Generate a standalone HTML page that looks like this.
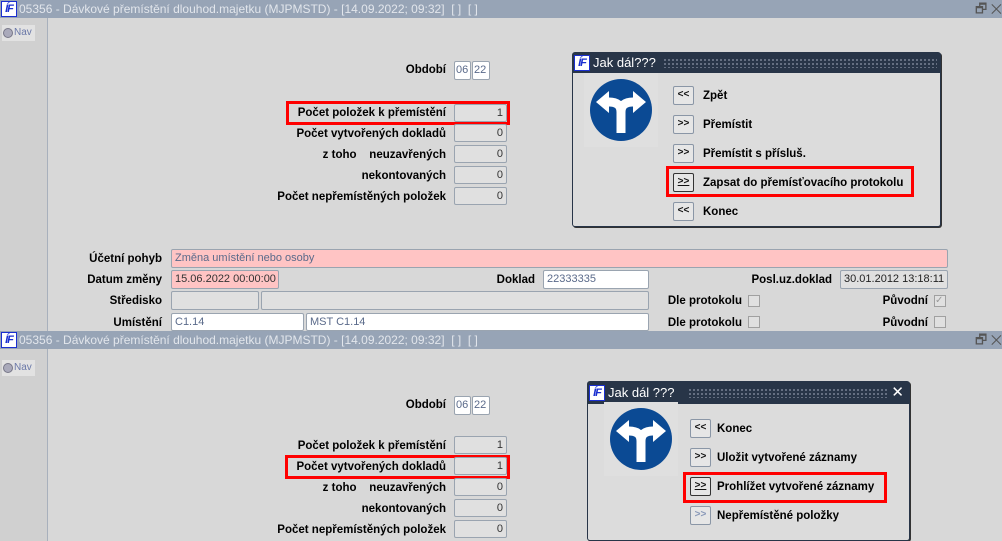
<!DOCTYPE html>
<html><head><meta charset="utf-8"><style>
*{margin:0;padding:0;box-sizing:border-box}
body{width:1002px;height:541px;overflow:hidden;background:#d8d8d8;font-family:"Liberation Sans",Arial,sans-serif;position:relative}
.a{position:absolute}
.tb{position:absolute;left:0;width:1002px;height:18px;background:#97a4b6;color:#e2e6ec;font-size:12px;line-height:18px;padding-left:19px;white-space:nowrap}
.logo{position:absolute;left:1px;top:1px;width:16px;height:16px;background:#fff;border:1px solid #1a2fd0;color:#1a2fd0;font:italic bold 11px/14px "Liberation Sans",sans-serif;text-align:center;letter-spacing:-1px}
.ctl{position:absolute;right:0;top:0;font-size:13px;color:#555;line-height:18px}
.side{position:absolute;left:0;width:48px;background:#d0d0d0;border-right:1px solid #a8b0bc}
.nav{position:absolute;left:2px;width:33px;height:14px;background:#e2e2e2;font-size:10px;color:#6a78a8;line-height:14px;padding-left:12px}
.nav:before{content:"";position:absolute;left:1px;top:3px;width:8px;height:8px;border-radius:50%;background:#aab;border:1px solid #778}
.lb{position:absolute;font-weight:bold;font-size:11.5px;color:#000;text-align:right;white-space:nowrap;line-height:14px}
.f{position:absolute;height:19px;border:1px solid #9aa4b0;border-radius:2px;background:#e0e0e0;font-size:11px;color:#5a6a8a;line-height:17px;padding:0 3px;white-space:nowrap;font-family:"Liberation Sans Narrow","Liberation Sans",sans-serif}
.w{background:#fff}
.p{background:#ffc4c4}
.r{text-align:right;color:#333}
.red{position:absolute;border:3px solid #f00}
.dlg{position:absolute;background:#dcdcdc;border:1px solid #283548;border-radius:3px;box-shadow:1px 1px 0 #333}
.dt{position:absolute;left:0;top:0;right:0;height:20px;background:#283548;color:#fff;font-size:13px;line-height:20px;padding-left:20px}
.dt .logo{top:2px;left:1px}
.dots{position:absolute;top:5px;height:10px;background-image:radial-gradient(#6a7486 1px,transparent 1.2px);background-size:4px 4px}
.bt{position:absolute;width:21px;height:19px;border:1px solid #8a96a6;border-radius:2px;background:#e6e6e6;font-size:10px;font-weight:bold;text-align:center;line-height:16px;color:#111}
.bl{position:absolute;font-weight:bold;font-size:11.5px;line-height:14px;white-space:nowrap}
.cb{position:absolute;width:12px;height:12px;border:1px solid #a0a0a0;background:#e0e0e0}
</style></head><body>

<div class="tb" style="top:0"><div class="logo">ÍF</div>05356 - Dávkové přemístění dlouhod.majetku (MJPMSTD) - [14.09.2022; 09:32]&nbsp; [ ]&nbsp; [ ]<span class="ctl">🗗 ✕</span></div>
<div class="side" style="top:18px;height:313px"></div>
<div class="nav" style="top:25px;height:16px;line-height:16px">Nav</div>

<div class="lb" style="right:556px;top:63px">Období</div>
<div class="f w" style="left:454px;top:61px;width:17px;padding:0 1px">06</div>
<div class="f w" style="left:472px;top:61px;width:18px;padding:0 1px">22</div>

<div class="red" style="left:286px;top:101px;width:224px;height:24px"></div>
<div class="lb" style="right:556px;top:106px">Počet položek k přemístění</div>
<div class="f r" style="left:454px;top:104px;width:53px;height:18px">1</div>
<div class="lb" style="right:556px;top:127px">Počet vytvořených dokladů</div>
<div class="f r" style="left:454px;top:124px;width:53px;height:18px">0</div>
<div class="lb" style="right:556px;top:148px">z toho&nbsp;&nbsp;&nbsp;&nbsp;neuzavřených</div>
<div class="f r" style="left:454px;top:145px;width:53px;height:18px">0</div>
<div class="lb" style="right:556px;top:169px">nekontovaných</div>
<div class="f r" style="left:454px;top:166px;width:53px;height:18px">0</div>
<div class="lb" style="right:556px;top:190px">Počet nepřemístěných položek</div>
<div class="f r" style="left:454px;top:187px;width:53px;height:18px">0</div>

<div class="dlg" style="left:572px;top:52px;width:369px;height:175px">
 <div class="dt"><div class="logo">ÍF</div>Jak dál???<div class="dots" style="left:90px;right:3px"></div></div>
 <svg class="a" style="left:11px;top:20px" width="74" height="74" viewBox="-37 -37 74 74"><rect x="-37" y="-37" width="74" height="74" fill="#dfdfdf"/><circle r="31" fill="#0b4a94"/><path d="M0 23V2Q0-8-12-8M0 2Q0-8 12-8" stroke="#fff" stroke-width="9" fill="none"/><path d="M-25-8L-12-19V3ZM25-8L12-19V3Z" fill="#fff"/></svg>
 <div class="bt" style="left:100px;top:33px">&lt;&lt;</div><div class="bl" style="left:130px;top:36px">Zpět</div>
 <div class="bt" style="left:100px;top:62px">&gt;&gt;</div><div class="bl" style="left:130px;top:65px">Přemístit</div>
 <div class="bt" style="left:100px;top:91px">&gt;&gt;</div><div class="bl" style="left:130px;top:94px">Přemístit s přísluš.</div>
 <div class="red" style="left:93px;top:113px;width:248px;height:31px"></div>
 <div class="bt" style="left:100px;top:120px;border-color:#333;border-style:solid"><u>&gt;&gt;</u></div><div class="bl" style="left:130px;top:123px">Zapsat do přemísťovacího protokolu</div>
 <div class="bt" style="left:100px;top:149px">&lt;&lt;</div><div class="bl" style="left:130px;top:152px">Konec</div>
</div>

<div class="lb" style="right:840px;top:252px">Účetní pohyb</div>
<div class="f p" style="left:171px;top:249px;width:777px">Změna umístění nebo osoby</div>
<div class="lb" style="right:840px;top:273px">Datum změny</div>
<div class="f p" style="left:171px;top:270px;width:108px;color:#333">15.06.2022 00:00:00</div>
<div class="lb" style="right:467px;top:273px">Doklad</div>
<div class="f w" style="left:543px;top:270px;width:106px">22333335</div>
<div class="lb" style="right:170px;top:273px">Posl.uz.doklad</div>
<div class="f" style="left:840px;top:270px;width:108px;color:#222">30.01.2012 13:18:11</div>
<div class="lb" style="right:840px;top:294px">Středisko</div>
<div class="f" style="left:171px;top:291px;width:88px"></div>
<div class="f" style="left:261px;top:291px;width:388px"></div>
<div class="lb" style="right:260px;top:294px">Dle protokolu</div><div class="cb" style="left:748px;top:295px"></div>
<div class="lb" style="right:74px;top:294px">Původní</div><div class="cb" style="left:934px;top:295px;font-size:10px;color:#999;line-height:10px">✓</div>
<div class="lb" style="right:840px;top:316px">Umístění</div>
<div class="f w" style="left:171px;top:313px;width:133px;height:18px">C1.14</div>
<div class="f w" style="left:306px;top:313px;width:343px;height:18px">MST C1.14</div>
<div class="lb" style="right:260px;top:316px">Dle protokolu</div><div class="cb" style="left:748px;top:316px"></div>
<div class="lb" style="right:74px;top:316px">Původní</div><div class="cb" style="left:934px;top:316px"></div>

<div class="tb" style="top:331px"><div class="logo">ÍF</div>05356 - Dávkové přemístění dlouhod.majetku (MJPMSTD) - [14.09.2022; 09:32]&nbsp; [ ]&nbsp; [ ]<span class="ctl">🗗 ✕</span></div>
<div class="side" style="top:349px;height:192px"></div>
<div class="nav" style="top:360px;height:16px;line-height:16px">Nav</div>

<div class="lb" style="right:556px;top:398px">Období</div>
<div class="f w" style="left:454px;top:396px;width:17px;padding:0 1px">06</div>
<div class="f w" style="left:472px;top:396px;width:18px;padding:0 1px">22</div>
<div class="lb" style="right:556px;top:439px">Počet položek k přemístění</div>
<div class="f r" style="left:454px;top:436px;width:53px;height:18px">1</div>
<div class="red" style="left:285px;top:455px;width:225px;height:24px"></div>
<div class="lb" style="right:556px;top:460px">Počet vytvořených dokladů</div>
<div class="f r" style="left:454px;top:457px;width:53px;height:18px">1</div>
<div class="lb" style="right:556px;top:481px">z toho&nbsp;&nbsp;&nbsp;&nbsp;neuzavřených</div>
<div class="f r" style="left:454px;top:478px;width:53px;height:18px">0</div>
<div class="lb" style="right:556px;top:502px">nekontovaných</div>
<div class="f r" style="left:454px;top:499px;width:53px;height:18px">0</div>
<div class="lb" style="right:556px;top:523px">Počet nepřemístěných položek</div>
<div class="f r" style="left:454px;top:520px;width:53px;height:18px">0</div>

<div class="dlg" style="left:587px;top:381px;width:323px;height:160px">
 <div class="dt" style="height:22px;line-height:22px"><div class="logo" style="top:3px">ÍF</div>Jak dál ???<div class="dots" style="left:100px;right:22px;top:6px"></div><span style="position:absolute;right:5px;top:0;font-size:15px">✕</span></div>
 <svg class="a" style="left:16px;top:20px" width="74" height="74" viewBox="-37 -37 74 74"><rect x="-37" y="-37" width="74" height="74" fill="#dfdfdf"/><circle r="31" fill="#0b4a94"/><path d="M0 23V2Q0-8-12-8M0 2Q0-8 12-8" stroke="#fff" stroke-width="9" fill="none"/><path d="M-25-8L-12-19V3ZM25-8L12-19V3Z" fill="#fff"/></svg>
 <div class="bt" style="left:102px;top:37px">&lt;&lt;</div><div class="bl" style="left:129px;top:40px">Konec</div>
 <div class="bt" style="left:102px;top:66px">&gt;&gt;</div><div class="bl" style="left:129px;top:69px">Uložit vytvořené záznamy</div>
 <div class="red" style="left:95px;top:90px;width:204px;height:31px"></div>
 <div class="bt" style="left:102px;top:95px;border-color:#333"><u>&gt;&gt;</u></div><div class="bl" style="left:129px;top:98px">Prohlížet vytvořené záznamy</div>
 <div class="bt" style="left:102px;top:124px;color:#8898b8">&gt;&gt;</div><div class="bl" style="left:129px;top:127px">Nepřemístěné položky</div>
</div>
</body></html>
